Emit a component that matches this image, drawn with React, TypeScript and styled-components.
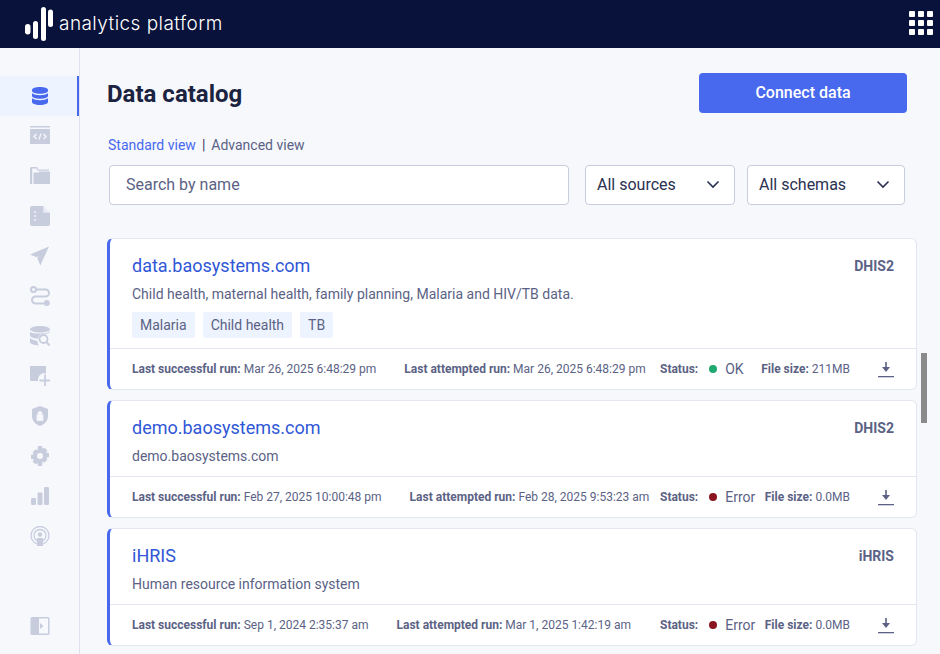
import React from "react";
import styled, { createGlobalStyle } from "styled-components";

const Global = createGlobalStyle`
  html, body { margin: 0; padding: 0; height: 100%; background: #f6f8fc; }
  body { font-family: Roboto, "Liberation Sans", sans-serif; overflow: hidden; }
  #root { height: 100vh; }
  * { box-sizing: border-box; }
`;

const Page = styled.div`
  height: 654px;
  display: flex;
  flex-direction: column;
  overflow: hidden;
`;
const TopBar = styled.header`
  height: 48px;
  flex: none;
  background: #08123a;
  display: flex;
  align-items: center;
  justify-content: space-between;
  padding: 0 8px 0 25px;
`;
const Brand = styled.div`
  display: flex;
  align-items: center;
  gap: 6px;
`;
const BrandName = styled.span`
  font-family: Inter, sans-serif;
  font-weight: 300;
  font-size: 19px;
  letter-spacing: 0.44px;
  color: #ffffff;
  position: relative;
  top: -1px;
`;
const AppGrid = styled.div`
  display: grid;
  grid-template-columns: repeat(3, 6px);
  grid-auto-rows: 6px;
  gap: 3px;
  margin-top: -3px;
  margin-right: -1px;
`;
const AppDot = styled.span`
  background: #fff;
  border-radius: 1px;
`;
const Body = styled.div`
  flex: 1;
  min-height: 0;
  display: flex;
`;
const Sidebar = styled.nav`
  width: 80px;
  flex: none;
  border-right: 1px solid #dfe2ee;
  padding: 28px 0 8px;
  display: flex;
  flex-direction: column;
`;
const NavItem = styled.div<{ $active?: boolean }>`
  height: 40px;
  flex: none;
  display: flex;
  align-items: center;
  justify-content: center;
  color: ${(p) => (p.$active ? "#4869ee" : "#c8cdde")};
  background: ${(p) => (p.$active ? "#eef4ff" : "transparent")};
  border-right: 2px solid ${(p) => (p.$active ? "#4869ee" : "transparent")};
  padding-left: 2px;
`;
const NavFoot = styled(NavItem)`
  margin-top: auto;
`;
const Main = styled.main`
  flex: 1;
  min-width: 0;
  position: relative;
  padding: 25px 23px 0 27px;
  overflow: hidden;
`;
const TitleRow = styled.div`
  display: flex;
  justify-content: space-between;
  align-items: center;
  height: 40px;
  padding-right: 10px;
`;
const Title = styled.h1`
  margin: 2px 0 0;
  font-size: 24px;
  line-height: 40px;
  font-weight: 700;
  color: #1c2340;
`;
const PrimaryButton = styled.button`
  width: 208px;
  height: 40px;
  border: 0;
  border-radius: 4px;
  padding: 0 0 2px;
  background: #4869ee;
  color: #fff;
  font: 500 16px Roboto, sans-serif;
`;
const Views = styled.div`
  margin: 22px 0 0 1px;
  height: 20px;
  display: flex;
  align-items: center;
  font-size: 14px;
  color: #5b6285;
`;
const ViewLink = styled.span<{ $active?: boolean }>`
  color: ${(p) => (p.$active ? "#4869ee" : "#5b6285")};
`;
const Sep = styled.span`
  margin: 0 6px;
  color: #3a4060;
`;
const Filters = styled.div`
  margin: 10px 12px 0 2px;
  display: flex;
`;
const Search = styled.div`
  width: 460px;
  height: 40px;
  background: #fff;
  border: 1px solid #c8cdde;
  border-radius: 4px;
  padding: 0 16px 2px;
  display: flex;
  align-items: center;
  font-size: 16px;
  color: #5b6285;
`;
const Select = styled.div<{ $w: number; $ml: number }>`
  width: ${(p) => p.$w}px;
  margin-left: ${(p) => p.$ml}px;
  height: 40px;
  background: #fff;
  border: 1px solid #c8cdde;
  border-radius: 4px;
  padding: 0 14px 2px 11px;
  display: flex;
  align-items: center;
  justify-content: space-between;
  font-size: 16px;
  color: #2a3050;
`;
const Cards = styled.div`
  margin-top: 33px;
  display: flex;
  flex-direction: column;
  gap: 10px;
`;
const Card = styled.article`
  background: #fff;
  border: 1px solid #e3e6f0;
  border-left: 3px solid #4869ee;
  border-radius: 6px;
`;
const CardTop = styled.div`
  padding: 13px 22px 10px 22px;
`;
const CardHead = styled.div`
  display: flex;
  justify-content: space-between;
  align-items: center;
  height: 26px;
`;
const CardName = styled.a`
  font-size: 18px;
  color: #2f57d6;
`;
const CardType = styled.span`
  font-size: 14px;
  font-weight: 700;
  color: #5b6285;
  position: relative;
  top: 1px;
`;
const CardDesc = styled.p`
  margin: 6px 0 0;
  font-size: 14px;
  line-height: 20px;
  color: #5b6285;
`;
const Tags = styled.div`
  margin-top: 8px;
  display: flex;
  gap: 8px;
`;
const Tag = styled.span`
  height: 26px;
  padding: 0 8px;
  display: flex;
  align-items: center;
  font-size: 14px;
  color: #5b6285;
  background: #eef4ff;
  border-radius: 2px;
`;
const Footer = styled.div`
  height: 41px;
  border-top: 1px solid #e3e6f0;
  padding: 0 22px;
  display: flex;
  align-items: center;
  font-size: 12px;
  color: #5b6285;
`;
const Runs = styled.div`
  flex: 1;
  display: flex;
  gap: 28px;
`;
const Label = styled.b`
  font-weight: 700;
`;
const Status = styled.div`
  width: 100px;
  display: flex;
  align-items: center;
`;
const Dot = styled.span<{ $ok: boolean }>`
  width: 8px;
  height: 8px;
  border-radius: 50%;
  margin: 0 8px 0 11px;
  background: ${(p) => (p.$ok ? "#1fa971" : "#8a1520")};
`;
const StatusText = styled.span`
  font-size: 14px;
`;
const FileSize = styled.div`
  width: 90px;
  text-align: right;
`;
const Download = styled.div`
  width: 44px;
  display: flex;
  justify-content: flex-end;
  padding-top: 2px;
  color: #5b6285;
`;
const Thumb = styled.div`
  position: absolute;
  left: 841px;
  top: 305px;
  width: 6px;
  height: 70px;
  background: #8a8a8a;
`;

const I = ({ children }: { children: React.ReactNode }) => (
  <svg width="20" height="20" viewBox="0 0 20 20" fill="currentColor">{children}</svg>
);

const icons: React.ReactNode[] = [
  <I key="db">
    <path d="M10 1C5.6 1 2 2.2 2 3.8V5c0 1.6 3.6 2.8 8 2.8S18 6.600 18 5V3.800C18 2.200 14.400 1 10 1Z" />
    <path d="M2 7.300V10c0 1.600 3.600 2.800 8 2.800s8-1.200 8-2.800V7.300c-1.700 1.300-4.800 1.900-8 1.900s-6.300-.6-8-1.900Z" />
    <path d="M2 12.300V16c0 1.600 3.600 3 8 3s8-1.400 8-3v-3.700c-1.700 1.300-4.800 1.900-8 1.900s-6.300-.6-8-1.900Z" />
  </I>,
  <I key="code">
    <path d="M0 0h20v1.400H0zM1 3h18a1 1 0 0 1 1 1v13a1 1 0 0 1-1 1H1a1 1 0 0 1-1-1V4a1 1 0 0 1 1-1Z" />
    <path d="M6.500 8 4 10.500 6.500 13M13.500 8l2.500 2.500-2.500 2.500M11 7.500l-2 6" fill="none" stroke="#f6f8fc" strokeWidth="1.200" />
  </I>,
  <I key="folder">
    <path d="M1.500 1H7l1.500 2.500H19v1.300H7.800L6.300 2.500H2.200V18H1a1 1 0 0 1-1-1V2.500A1.500 1.500 0 0 1 1.500 1Z" />
    <path d="M3.500 18V6.500h5l1-1H19a1 1 0 0 1 1 1V17a1 1 0 0 1-1 1Z" />
  </I>,
  <I key="doc">
    <path d="M2 0h11.500L20 6.500V18a2 2 0 0 1-2 2H2a2 2 0 0 1-2-2V2a2 2 0 0 1 2-2Z" />
    <path d="M13.500 0v6.500H20Z" fill="#f6f8fc" />
    <path d="M13.800 1.500V6h4.500Z" fill="#e6e9f2" />
    <circle cx="5" cy="6" r=".9" fill="#f6f8fc" /><circle cx="5" cy="10" r=".9" fill="#f6f8fc" /><circle cx="5" cy="14" r=".9" fill="#f6f8fc" />
  </I>,
  <I key="send"><path d="M19 .5 0 8.500l6.500 2.700L8.800 10l-1.500 1.900 3 7.600Z" /></I>,
  <I key="route">
    <path d="M6 3.500h9.500a3.500 3.500 0 0 1 0 7h-10a3.500 3.500 0 0 0 0 7H14" fill="none" stroke="currentColor" strokeWidth="2" />
    <circle cx="3.500" cy="3.500" r="2.500" fill="#f6f8fc" stroke="currentColor" strokeWidth="2" />
    <circle cx="16.800" cy="17" r="3" />
  </I>,
  <I key="dbsearch">
    <path d="M10 0C4.500 0 0 1.500 0 3.300 0 5 4.500 6.500 10 6.500S20 5 20 3.300C20 1.500 15.500 0 10 0ZM0 6v3.500C0 11 3.500 12.300 8 12.700 8.500 9.800 10.700 7.800 13.500 7.800c2.200 0 5 0 6.500-1.800V5c-2 1.800-5.800 2.500-10 2.500S2 7 0 6ZM0 12v4c0 1.800 4 3.200 8.800 3.400L7 14.800C4 14.500 1.500 13.500 0 12Z" />
    <circle cx="13.500" cy="13" r="4" fill="#f6f8fc" stroke="currentColor" strokeWidth="1.800" />
    <path d="M16.500 16l3 3.500" stroke="currentColor" strokeWidth="2" />
  </I>,
  <I key="addblock">
    <path d="M0 0h16v7.500h-1.500V7a6.500 6.500 0 0 0-6.500 6.500V15H1a1 1 0 0 1-1-1Z" />
    <path d="M15 8.500v11.500M9.500 14.500h10.500" stroke="currentColor" strokeWidth="1.800" fill="none" />
  </I>,
  <I key="shield">
    <path d="M10 0 18 3v7c0 5-3.500 8.300-8 10-4.500-1.700-8-5-8-10V3Z" />
    <path d="M7 9h6v5.500H7zM8 9V7.500a2 2 0 0 1 4 0V9" fill="#f6f8fc" stroke="#f6f8fc" strokeWidth=".7" />
  </I>,
  <I key="gear">
    <path d="M8 0h4l.5 2.700 2-.9 2.800 2.800-1.100 2 2.800.6v4l-2.800.5 1.100 2.100-2.800 2.800-2-1.100L12 20H8l-.5-2.900-2 1.100-2.800-2.800 1.100-2.100L1 12.800v-4l2.800-.6-1.100-2 2.800-2.800 2 .9ZM10 7a3 3 0 1 0 0 6 3 3 0 0 0 0-6Z" fillRule="evenodd" />
  </I>,
  <I key="bars">
    <rect x="1" y="12" width="5" height="7" rx="1.200" />
    <rect x="7.500" y="6.500" width="5" height="12.500" rx="1.200" />
    <rect x="14" y="1" width="5" height="18" rx="1.200" />
  </I>,
  <I key="podcast">
    <circle cx="10" cy="9.500" r="9" fill="none" stroke="currentColor" strokeWidth="1.300" />
    <circle cx="10" cy="9.500" r="6" fill="none" stroke="currentColor" strokeWidth="1.300" />
    <circle cx="10" cy="8.500" r="2.200" />
    <path d="M7 12h6v8H7z" />
  </I>,
];

const Chevron = () => (
  <svg width="14" height="14" viewBox="0 0 14 14" fill="none" stroke="#2a3050" strokeWidth="1.600"><path d="M1.500 4.500 7 10l5.500-5.500" /></svg>
);
const DownloadIcon = () => (
  <svg width="16" height="16" viewBox="0 0 16 16" fill="currentColor"><path d="M7.200 0h1.600v5H12L8 10 4 5h3.200Z" /><path d="M0 14h16v1.300H0z" /></svg>
);

type Row = { name: string; type: string; desc: string; tags?: string[]; ok: boolean; s: string; a: string; size: string };
const rows: Row[] = [
  { name: "data.baosystems.com", type: "DHIS2", desc: "Child health, maternal health, family planning, Malaria and HIV/TB data.", tags: ["Malaria", "Child health", "TB"], ok: true, s: "Mar 26, 2025 6:48:29 pm", a: "Mar 26, 2025 6:48:29 pm", size: "211MB" },
  { name: "demo.baosystems.com", type: "DHIS2", desc: "demo.baosystems.com", ok: false, s: "Feb 27, 2025 10:00:48 pm", a: "Feb 28, 2025 9:53:23 am", size: "0.0MB" },
  { name: "iHRIS", type: "iHRIS", desc: "Human resource information system", ok: false, s: "Sep 1, 2024 2:35:37 am", a: "Mar 1, 2025 1:42:19 am", size: "0.0MB" },
];

export default function App() {
  return (
    <Page>
      <Global />
      <TopBar>
        <Brand>
          <svg width="28" height="34" viewBox="0 0 28 34" fill="#fff">
            <rect x="0" y="17" width="5.500" height="10.500" rx="2.700" />
            <rect x="8" y="14" width="5" height="18" rx="2.500" />
            <rect x="16" y="0" width="5" height="34" rx="2.500" />
            <rect x="23" y="2.500" width="5" height="17.500" rx="2.500" />
          </svg>
          <BrandName>analytics platform</BrandName>
        </Brand>
        <AppGrid>{Array.from({ length: 9 }, (_, i) => <AppDot key={i} />)}</AppGrid>
      </TopBar>
      <Body>
        <Sidebar>
          {icons.map((icon, i) => <NavItem key={i} $active={i === 0}>{icon}</NavItem>)}
          <NavFoot>
            <svg width="20" height="20" viewBox="0 0 20 20" fill="currentColor">
              <path d="M2 1h16a1.500 1.500 0 0 1 1.500 1.500v15A1.500 1.500 0 0 1 18 19H2a1.500 1.500 0 0 1-1.500-1.500v-15A1.500 1.500 0 0 1 2 1Z" />
              <path d="M9 2.500h9v15H9z" fill="#f6f8fc" />
              <path d="M10 7v6l3.500-3Z" />
            </svg>
          </NavFoot>
        </Sidebar>
        <Main>
          <TitleRow>
            <Title>Data catalog</Title>
            <PrimaryButton>Connect data</PrimaryButton>
          </TitleRow>
          <Views>
            <ViewLink $active>Standard view</ViewLink>
            <Sep>|</Sep>
            <ViewLink>Advanced view</ViewLink>
          </Views>
          <Filters>
            <Search>Search by name</Search>
            <Select $w={150} $ml={16}>All sources <Chevron /></Select>
            <Select $w={158} $ml={12}>All schemas <Chevron /></Select>
          </Filters>
          <Cards>
            {rows.map((r) => (
              <Card key={r.name}>
                <CardTop>
                  <CardHead>
                    <CardName>{r.name}</CardName>
                    <CardType>{r.type}</CardType>
                  </CardHead>
                  <CardDesc>{r.desc}</CardDesc>
                  {r.tags && <Tags>{r.tags.map((t) => <Tag key={t}>{t}</Tag>)}</Tags>}
                </CardTop>
                <Footer>
                  <Runs>
                    <span><Label>Last successful run:</Label> {r.s}</span>
                    <span><Label>Last attempted run:</Label> {r.a}</span>
                  </Runs>
                  <Status>
                    <Label>Status:</Label>
                    <Dot $ok={r.ok} />
                    <StatusText>{r.ok ? "OK" : "Error"}</StatusText>
                  </Status>
                  <FileSize><Label>File size:</Label> {r.size}</FileSize>
                  <Download><DownloadIcon /></Download>
                </Footer>
              </Card>
            ))}
          </Cards>
          <Thumb />
        </Main>
      </Body>
    </Page>
  );
}
